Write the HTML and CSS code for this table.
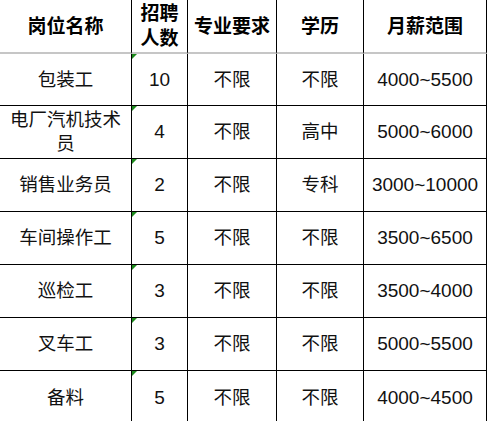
FILE: index.html
```html
<!DOCTYPE html>
<html lang="zh-CN">
<head>
<meta charset="utf-8">
<title>招聘岗位</title>
<link rel="stylesheet" href="styles.css">
</head>
<body>
<div class="sheet">
  <div class="cell head">岗位名称</div>
  <div class="cell head">招聘人数</div>
  <div class="cell head">专业要求</div>
  <div class="cell head">学历</div>
  <div class="cell head">月薪范围</div>

  <div class="cell">包装工</div>
  <div class="cell num flag">10</div>
  <div class="cell">不限</div>
  <div class="cell">不限</div>
  <div class="cell num">4000~5500</div>

  <div class="cell">电厂汽机技术员</div>
  <div class="cell num flag">4</div>
  <div class="cell">不限</div>
  <div class="cell">高中</div>
  <div class="cell num">5000~6000</div>

  <div class="cell">销售业务员</div>
  <div class="cell num flag">2</div>
  <div class="cell">不限</div>
  <div class="cell">专科</div>
  <div class="cell num">3000~10000</div>

  <div class="cell">车间操作工</div>
  <div class="cell num flag">5</div>
  <div class="cell">不限</div>
  <div class="cell">不限</div>
  <div class="cell num">3500~6500</div>

  <div class="cell">巡检工</div>
  <div class="cell num flag">3</div>
  <div class="cell">不限</div>
  <div class="cell">不限</div>
  <div class="cell num">3500~4000</div>

  <div class="cell">叉车工</div>
  <div class="cell num flag">3</div>
  <div class="cell">不限</div>
  <div class="cell">不限</div>
  <div class="cell num">5000~5500</div>

  <div class="cell last">备料</div>
  <div class="cell num flag last">5</div>
  <div class="cell last">不限</div>
  <div class="cell last">不限</div>
  <div class="cell num last">4000~4500</div>
</div>
</body>
</html>
```

FILE: styles.css
```css
html, body {
  margin: 0;
  padding: 0;
  background: #ffffff;
}

.sheet {
  display: grid;
  grid-template-columns: 132px 56px 89px 87px 123px;
  grid-template-rows: 54px 52px 53px 53px 53px 53px 53px 53px;
  font-family: "Liberation Sans", "Noto Sans CJK SC", sans-serif;
  color: #111111;
}

.cell {
  box-sizing: border-box;
  display: flex;
  align-items: center;
  justify-content: center;
  text-align: center;
  padding: 0 3px;
  font-size: 18.5px;
  line-height: 24px;
  border-right: 1px solid #000000;
  border-bottom: 1px solid #000000;
  position: relative;
}

.cell.head {
  font-weight: 700;
  font-size: 19px;
  line-height: 25px;
  color: #000000;
  border-bottom: 2px solid #c6c6c6;
}

.cell.num {
  font-size: 19px;
}

.cell.last {
  border-bottom: none;
}

.cell.flag::before {
  content: "";
  position: absolute;
  top: 0;
  left: 0;
  width: 0;
  height: 0;
  border-top: 5px solid #1c8a1c;
  border-right: 5px solid transparent;
}
```
